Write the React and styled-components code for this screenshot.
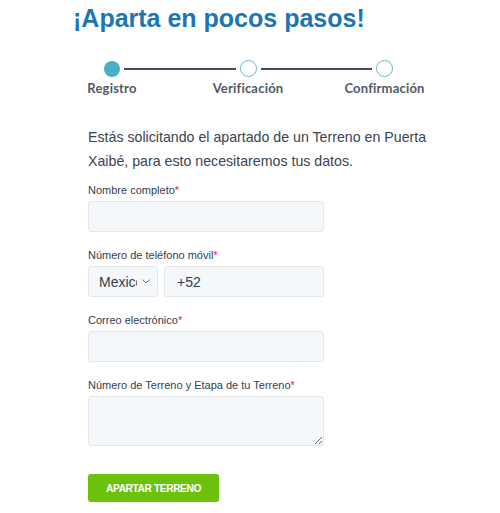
import React from "react";
import styled, { createGlobalStyle } from "styled-components";

const Global = createGlobalStyle`
  html, body { margin: 0; padding: 0; background: #ffffff; }
  body { font-family: "Liberation Sans", Arial, sans-serif; }
  * { box-sizing: border-box; }
`;

const Page = styled.div`
  width: 500px;
  height: 513px;
  overflow: hidden;
  padding: 6px 0 0 73px;
`;

const Title = styled.h1`
  margin: 0;
  font-family: "Liberation Sans", Arial, sans-serif;
  font-weight: 700;
  font-size: 25px;
  line-height: 25px;
  color: #1e75b3;
  letter-spacing: 0;
`;

const Stepper = styled.div`
  margin: 29px 0 0 31px;
  width: 289px;
  display: grid;
  grid-template-columns: 16px 1fr 17px 1fr 17px;
  column-gap: 4px;
  row-gap: 4px;
  align-items: center;
`;

const Dot = styled.span`
  width: ${(p) => (p.$active ? 16 : 17)}px;
  height: ${(p) => (p.$active ? 16 : 17)}px;
  border-radius: 50%;
  background: ${(p) => (p.$active ? "#4aafc7" : "#ffffff")};
  border: ${(p) => (p.$active ? "none" : "1.5px solid #5bbbcf")};
  justify-self: center;
`;

const Line = styled.span`
  height: 2px;
  background: #414b5b;
`;

const StepLabel = styled.div`
  grid-row: 2;
  grid-column: ${(p) => p.$col};
  display: flex;
  justify-content: center;
  width: 100%;
  span {
    white-space: nowrap;
    font-family: Lato, "Noto Sans", sans-serif;
    font-weight: 700;
    font-size: 13px;
    line-height: 15px;
    color: #505864;
    letter-spacing: 0.2px;
  }
`;

const Form = styled.form`
  margin: 29px 0 0 15px;
  width: 340px;
  display: flex;
  flex-direction: column;
`;

const Intro = styled.p`
  margin: 0 0 11px 0;
  font-size: 14.2px;
  line-height: 24px;
  color: #3a4351;
  width: 345px;
`;

const Field = styled.div`
  display: flex;
  flex-direction: column;
  gap: 4px;
  margin-bottom: 17px;
`;

const Label = styled.label`
  font-size: 11px;
  line-height: 13px;
  color: #33404f;
  &::after {
    content: "*";
    color: #e3262e;
  }
`;

const inputBase = `
  height: 31px;
  background: #f5f8fa;
  border: 1px solid #e3e7eb;
  border-radius: 3px;
  font-family: "Liberation Sans", Arial, sans-serif;
  font-size: 14px;
  color: #33404f;
  outline: none;
`;

const Input = styled.input`
  ${inputBase}
  width: 236px;
  padding: 0 11px;
`;

const Row = styled.div`
  display: flex;
  gap: 6px;
`;

const SelectWrap = styled.div`
  position: relative;
  width: 70px;
`;

const Select = styled.select`
  ${inputBase}
  width: 70px;
  padding: 0 20px 0 10px;
  appearance: none;
  -webkit-appearance: none;
`;

const Chevron = styled.svg`
  position: absolute;
  right: 8px;
  top: 13px;
  pointer-events: none;
`;

const PhoneInput = styled.input`
  ${inputBase}
  width: 160px;
  padding: 0 12px;
`;

const TextArea = styled.textarea`
  ${inputBase}
  width: 236px;
  height: 50px;
  padding: 6px 11px;
  resize: vertical;
`;

const Button = styled.button`
  margin-top: 11px;
  width: 131px;
  height: 28px;
  border: none;
  border-radius: 3px;
  background: #6bc10b;
  color: #ffffff;
  font-family: "Liberation Sans", Arial, sans-serif;
  font-weight: 700;
  font-size: 10.2px;
  letter-spacing: -0.4px;
  cursor: pointer;
`;

export default function App() {
  return (
    <>
      <Global />
      <Page>
        <Title>¡Aparta en pocos pasos!</Title>
        <Stepper>
          <Dot $active />
          <Line />
          <Dot />
          <Line />
          <Dot />
          <StepLabel $col={1}><span>Registro</span></StepLabel>
          <StepLabel $col={3}><span>Verificación</span></StepLabel>
          <StepLabel $col={5}><span>Confirmación</span></StepLabel>
        </Stepper>
        <Form onSubmit={(e) => e.preventDefault()}>
          <Intro>
            Estás solicitando el apartado de un Terreno en Puerta Xaibé, para esto necesitaremos tus datos.
          </Intro>
          <Field>
            <Label>Nombre completo</Label>
            <Input type="text" />
          </Field>
          <Field>
            <Label>Número de teléfono móvil</Label>
            <Row>
              <SelectWrap>
                <Select defaultValue="mx">
                  <option value="mx">Mexico</option>
                </Select>
                <Chevron width="8" height="5" viewBox="0 0 8 5">
                  <path d="M0.5 0.5 L4 4 L7.5 0.5" fill="none" stroke="#6b7280" strokeWidth="1" />
                </Chevron>
              </SelectWrap>
              <PhoneInput type="tel" defaultValue="+52" />
            </Row>
          </Field>
          <Field>
            <Label>Correo electrónico</Label>
            <Input type="email" />
          </Field>
          <Field>
            <Label>Número de Terreno y Etapa de tu Terreno</Label>
            <TextArea />
          </Field>
          <Button type="submit">APARTAR TERRENO</Button>
        </Form>
      </Page>
    </>
  );
}
